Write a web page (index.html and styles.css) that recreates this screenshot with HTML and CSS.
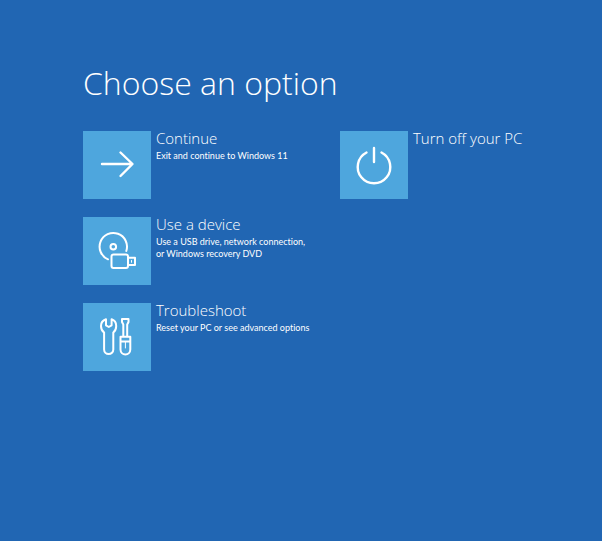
FILE: index.html
```html
<!DOCTYPE html>
<html lang="en">
<head>
<meta charset="utf-8">
<title>Choose an option</title>
<link rel="stylesheet" href="styles.css">
</head>
<body>
<main class="screen">
  <h1 class="title">Choose an option</h1>
  <div class="options">
    <div class="column">
      <button class="option" type="button">
        <svg class="tile" viewBox="0 0 68 68" aria-hidden="true">
          <path class="bold" d="M19 33H49M37.5 21.5 49.5 33 37.5 45"/>
        </svg>
        <span class="text">
          <span class="name">Continue</span>
          <span class="detail">Exit and continue to Windows 11</span>
        </span>
      </button>
      <button class="option" type="button">
        <svg class="tile" viewBox="0 0 68 68" aria-hidden="true">
          <g transform="translate(1 0)">
            <path d="M24 42.3A13.7 13.7 0 1 1 42.3 34"/>
            <circle cx="29.3" cy="29.7" r="2.8"/>
            <rect x="27.5" y="37.5" width="16.5" height="13.5" rx="2"/>
            <path d="M44 40.8H51V48H44"/>
            <path class="fine" d="M47.5 43.5V45.3"/>
          </g>
        </svg>
        <span class="text">
          <span class="name">Use a device</span>
          <span class="detail">Use a USB drive, network connection,<br>or Windows recovery DVD</span>
        </span>
      </button>
      <button class="option" type="button">
        <svg class="tile" viewBox="0 0 68 68" aria-hidden="true">
          <g transform="translate(1 0)">
            <path d="M22 16.3V22.3L24.8 24 27.6 22.3V16.3C30.5 17.3 32.2 20 32.2 22.9C32.2 26.2 31 28.2 29.3 29.5V46.5A4.6 4.6 0 0 1 20.1 46.5V29.5C18.4 28.2 17 26.2 17 22.9C17 20 19 17.3 22 16.3Z"/>
            <path d="M38 16H44.5V19L43.2 21.5V33.5M38 16V19L39.3 21.5V33.5M36.5 33.8H46.3V46.5A4.9 4.9 0 0 1 36.5 46.5ZM36.5 38.5H46.3"/>
            <path class="fine" d="M41.4 39V45"/>
          </g>
        </svg>
        <span class="text">
          <span class="name">Troubleshoot</span>
          <span class="detail">Reset your PC or see advanced options</span>
        </span>
      </button>
    </div>
    <div class="column">
      <button class="option" type="button">
        <svg class="tile" viewBox="0 0 68 68" aria-hidden="true">
          <path class="bold" d="M26.5 21.5A16.3 16.3 0 1 0 41.5 21.5M34 17V31"/>
        </svg>
        <span class="text">
          <span class="name">Turn off your PC</span>
        </span>
      </button>
    </div>
  </div>
</main>
</body>
</html>
```
FILE: styles.css
```css
* {
  box-sizing: border-box;
}

body {
  margin: 0;
  min-height: 100vh;
  background: #2166b3;
  color: #fff;
  font-family: "Open Sans", "Noto Sans", sans-serif;
}

.screen {
  padding: 59px 24px 24px 83px;
}

.title {
  margin: 0 0 24px;
  font-size: 32px;
  font-weight: 300;
  line-height: 48px;
}

.options {
  display: grid;
  grid-template-columns: 257px 1fr;
}

.column {
  display: flex;
  flex-direction: column;
  gap: 18px;
}

.option {
  display: flex;
  gap: 5px;
  padding: 0;
  border: 0;
  background: none;
  color: inherit;
  font: inherit;
  text-align: left;
  white-space: nowrap;
  cursor: pointer;
}

.tile {
  flex: none;
  width: 68px;
  height: 68px;
  background: #4ea6dd;
  fill: none;
  stroke: #fff;
  stroke-width: 2;
  stroke-linecap: round;
  stroke-linejoin: round;
}

.bold {
  stroke-width: 2.4;
}

.fine {
  stroke-width: 1;
}

.text {
  display: flex;
  flex-direction: column;
  gap: 1px;
  margin-top: -4px;
}

.name {
  font-size: 15px;
  font-weight: 300;
  line-height: 22px;
}

.detail {
  font-family: Lato, "Open Sans", sans-serif;
  font-size: 9px;
  font-variant-ligatures: none;
  line-height: 12px;
}
```
